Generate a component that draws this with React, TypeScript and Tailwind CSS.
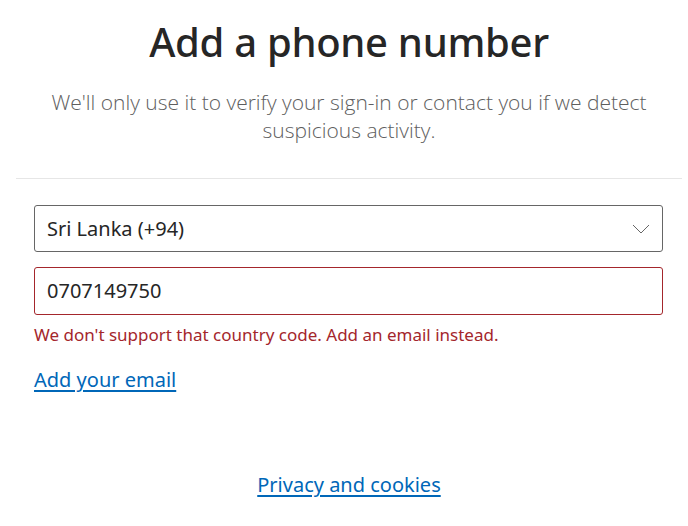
import React from "react";

export default function App() {
  return (
    <div className="w-[688px] h-[526px] bg-white flex flex-col">
      <div className="w-[666px] ml-[16px] flex flex-col items-center pt-[16px]">
        <h1 className="text-[40px] leading-[52px] font-medium text-[#262626] font-['Noto_Sans',sans-serif] tracking-[-0.3px]">
          Add a phone number
        </h1>
        <p className="mt-[20px] text-[21px] leading-[28px] text-[#5e5e5e] text-center font-['Open_Sans',sans-serif] font-light px-[20px]">
          We'll only use it to verify your sign-in or contact you if we detect suspicious activity.
        </p>
      </div>
      <div className="ml-[16px] w-[666px] mt-[34px] h-px bg-[#e6e6e6]" />
      <div className="pl-[34px] w-[663px] pt-[26px] flex flex-col font-['Noto_Sans',sans-serif]">
        <div className="h-[47px] border border-[#666666] rounded-[3px] flex items-center justify-between pl-[12px] pr-[12px] text-[20px] text-[#262626]">
          <span>Sri Lanka (+94)</span>
          <svg width="18" height="10" viewBox="0 0 18 10" fill="none">
            <path d="M1 1 L9 9 L17 1" stroke="#666" strokeWidth="1" />
          </svg>
        </div>
        <div className="mt-[15px] h-[48px] border border-[#a4262c] rounded-[3px] flex items-center pl-[12px] text-[20px] text-[#262626]">
          0707149750
        </div>
        <p className="mt-[10px] text-[17px] leading-[20px] text-[#a4262c]">
          We don't support that country code. Add an email instead.
        </p>
        <a href="#" className="mt-[23px] self-start text-[20px] leading-[24px] text-[#0067b8] underline underline-offset-[3px]">
          Add your email
        </a>
      </div>
      <div className="w-[666px] ml-[16px] mt-[81px] flex justify-center font-['Noto_Sans',sans-serif]">
        <a href="#" className="text-[20px] leading-[24px] text-[#0067b8] underline underline-offset-[3px]">
          Privacy and cookies
        </a>
      </div>
    </div>
  );
}
